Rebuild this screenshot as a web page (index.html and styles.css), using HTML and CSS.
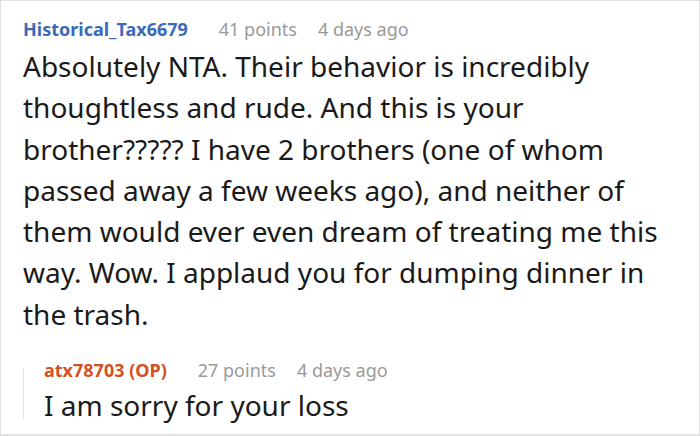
FILE: index.html
```html
<!DOCTYPE html>
<html>
<head>
<meta charset="utf-8">
<link rel="stylesheet" href="styles.css">
</head>
<body>
<div class="card">
  <div class="comment">
    <div class="meta">
      <span class="user">Historical_Tax6679</span>
      <span class="points">41 points</span>
      <span class="time">4 days ago</span>
    </div>
    <p class="text">Absolutely NTA. Their behavior is incredibly thoughtless and rude. And this is your brother????? I have 2 brothers (one of whom passed away a few weeks ago), and neither of them would ever even dream of treating me this way. Wow. I applaud you for dumping dinner in the trash.</p>
    <div class="reply">
      <div class="meta">
        <span class="user op">atx78703 (OP)</span>
        <span class="points">27 points</span>
        <span class="time">4 days ago</span>
      </div>
      <p class="text reply-text">I am sorry for your loss</p>
    </div>
  </div>
</div>
</body>
</html>
```
FILE: styles.css
```css
html, body {
  margin: 0;
  padding: 0;
  background: #ffffff;
}
body {
  font-family: "Noto Sans", "DejaVu Sans", sans-serif;
  color: #1a1a1a;
}
.card {
  width: 700px;
  height: 436px;
  box-sizing: border-box;
  border: 1px solid #e2e2e2;
  border-bottom-width: 2px;
  overflow: hidden;
}
.comment {
  padding: 14px 10px 0 22px;
}
.meta {
  display: flex;
  align-items: baseline;
  font-size: 18px;
  line-height: 28px;
  height: 28px;
  white-space: nowrap;
}
.user {
  font-weight: 700;
  color: #3a6ab8;
  margin-right: 31px;
}
.user.op {
  color: #d4511e;
}
.points {
  color: #999999;
  margin-right: 21px;
}
.time {
  color: #999999;
}
.text {
  margin: 0;
  font-size: 28px;
  line-height: 41.3px;
  padding-top: 3px;
}
.reply {
  position: relative;
  margin-top: 21px;
  padding-left: 21px;
}
.reply::before {
  content: "";
  position: absolute;
  left: 0;
  top: 13px;
  height: 50px;
  width: 1px;
  background: #e2e2e2;
}
.reply-text {
  padding-top: 3px;
  line-height: 36px;
}
```
